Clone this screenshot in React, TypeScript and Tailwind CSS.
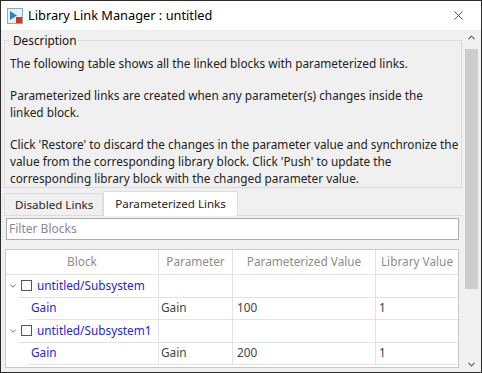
import { ChevronDown, ChevronUp, X } from "lucide-react";

interface Row {
  kind: "group" | "child";
  block: string;
  parameter?: string;
  value?: string;
  library?: string;
}

const rows: Row[] = [
  { kind: "group", block: "untitled/Subsystem" },
  { kind: "child", block: "Gain", parameter: "Gain", value: "100", library: "1" },
  { kind: "group", block: "untitled/Subsystem1" },
  { kind: "child", block: "Gain", parameter: "Gain", value: "200", library: "1" },
];

function AppIcon() {
  return (
    <svg width="16" height="16" viewBox="0 0 16 16">
      <rect x="0.5" y="0.5" width="15" height="15" fill="#e8f2fb" stroke="#8aa9c6" />
      <path d="M3 3 L10 7.5 L3 12 Z" fill="#2f7fd0" />
      <rect x="9" y="9" width="6" height="6" fill="#d8381c" />
    </svg>
  );
}

export default function App() {
  return (
    <div className="w-[482px] h-[373px] border border-[#2b2b2b] bg-[#f0f0f0] flex flex-col overflow-hidden font-['Noto_Sans',sans-serif] text-[12px] text-[#1e1e1e]">
      {/* Title bar */}
      <div className="h-[29px] bg-white flex items-center shrink-0">
        <div className="ml-[6px] mr-[5px] flex items-center">
          <AppIcon />
        </div>
        <span className="text-[12.8px] text-black">Library Link Manager : untitled</span>
        <X className="ml-auto mr-[15px] w-[15px] h-[15px] text-[#333]" strokeWidth={1.3} />
      </div>

      <div className="flex flex-1 min-h-0">
        <div className="flex-1 min-w-0 flex flex-col pl-[3px] pr-[1px]">
          {/* Description group */}
          <fieldset className="border border-[#dcdcdc] mt-[1px] px-[5px] h-[157px] shrink-0 min-w-0 overflow-hidden">
            <legend className="px-[2px] text-[11.8px] text-[#111] leading-[18px] ml-[1px]">Description</legend>
            <div className="leading-[17px] text-[11.8px] text-[#222] whitespace-nowrap mt-[6px]">
              <p>The following table shows all the linked blocks with parameterized links.</p>
              <p className="mt-[15px]">
                Parameterized links are created when any parameter(s) changes inside the
                <br />
                linked block.
              </p>
              <p className="mt-[15px]">
                Click 'Restore' to discard the changes in the parameter value and synchronize the
                <br />
                value from the corresponding library block. Click 'Push' to update the
                <br />
                corresponding library block with the changed parameter value.
              </p>
            </div>
          </fieldset>

          {/* Tabs */}
          <div className="flex items-end mt-[3px] h-[25px] border-b border-[#dcdcdc] shrink-0">
            <div className="h-[22px] pl-[10px] pr-[9px] flex items-center border border-b-0 border-[#dcdcdc] text-[11.6px]">
              Disabled Links
            </div>
            <div className="h-[25px] px-[11px] flex items-center border border-b-0 border-[#dcdcdc] bg-white text-[11.6px] -mb-[1px]">
              Parameterized Links
            </div>
          </div>

          {/* Filter */}
          <div className="mt-[2px] ml-[2px] mr-[3px] h-[22px] border border-[#adadad] bg-white flex items-center px-[2px] shrink-0">
            <span className="text-[12px] text-[#8a8a8a]">Filter Blocks</span>
          </div>

          {/* Table */}
          <div className="mt-[9px] ml-[1px] mr-[3px] flex-1 border border-[#c8c8c8] bg-white text-[11.8px] overflow-hidden">
            <div className="grid grid-cols-[153px_74px_143px_1fr] h-[25px] border-b border-[#e3e3e3] text-[#8d8d8d]">
              <div className="flex items-center justify-center border-r border-[#e3e3e3]">Block</div>
              <div className="flex items-center justify-center border-r border-[#e3e3e3]">Parameter</div>
              <div className="flex items-center justify-center border-r border-[#e3e3e3]">Parameterized Value</div>
              <div className="flex items-center justify-center">Library Value</div>
            </div>
            {rows.map((r, i) => (
              <div key={i} className="flex h-[22.5px]">
                {r.kind === "group" ? (
                  <div className="w-[12px] flex items-center justify-end">
                    <ChevronDown className="w-[10px] h-[10px] text-[#555]" strokeWidth={2} />
                  </div>
                ) : (
                  <div className="w-[22px]" />
                )}
                <div
                  className={`flex-1 grid ${
                    r.kind === "group" ? "grid-cols-[141px_74px_143px_1fr]" : "grid-cols-[131px_74px_143px_1fr]"
                  } border-b border-[#e3e3e3] bg-white`}
                >
                  <div className="flex items-center border-r border-[#e3e3e3] pl-[3px] gap-[5px]">
                    {r.kind === "group" && (
                      <span className="w-[11px] h-[11px] border border-[#555] bg-white shrink-0" />
                    )}
                    <span className="text-[#2424dd]">{r.block}</span>
                  </div>
                  <div className="flex items-center border-r border-[#e3e3e3] pl-[2px] text-[#444]">
                    {r.parameter}
                  </div>
                  <div className="flex items-center border-r border-[#e3e3e3] pl-[4px] text-[#444]">{r.value}</div>
                  <div className="flex items-center pl-[3px] text-[#444]">{r.library}</div>
                </div>
              </div>
            ))}
          </div>
          <div className="h-[4px] shrink-0" />
        </div>

        {/* Scrollbar */}
        <div className="w-[17px] shrink-0 flex flex-col items-center pt-[2px] pb-[2px] mr-[1px]">
          <ChevronUp className="w-[11px] h-[11px] text-[#555]" strokeWidth={2.2} />
          <div className="mt-[6px] w-[13px] h-[240px] bg-[#cdcdcd]" />
          <div className="flex-1" />
          <ChevronDown className="w-[11px] h-[11px] text-[#555]" strokeWidth={2.2} />
        </div>
      </div>
    </div>
  );
}
